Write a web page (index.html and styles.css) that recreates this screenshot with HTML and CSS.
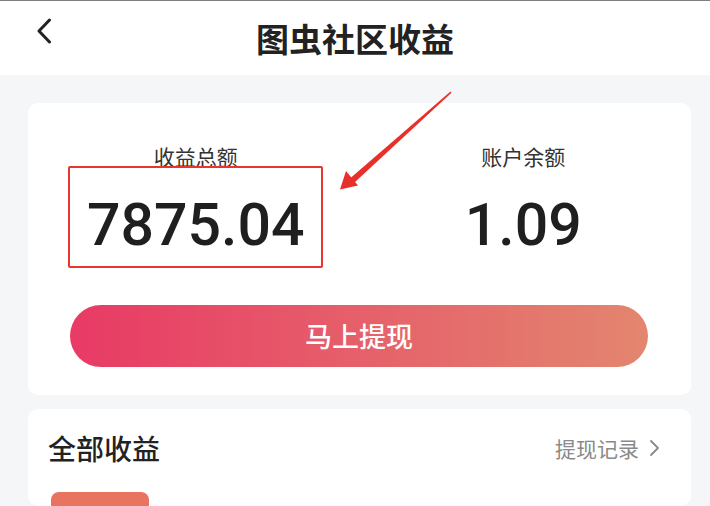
FILE: index.html
```html
<html>

	<head>
		<meta charset="utf-8">
		<title>图虫社区收益</title>
		<meta name="viewport" content="width=device-width,initial-scale=1,minimum-scale=1,maximum-scale=1,user-scalable=no" />

		<link rel="stylesheet" href="styles.css">
	</head>

	<body>
		<div class="header">
			<span class="back">
				<svg width="16" height="26" viewBox="0 0 16 26">
					<polyline points="13.5,2 3,13 13.5,24" fill="none" stroke="#222" stroke-width="3" stroke-linecap="round" stroke-linejoin="round" />
				</svg>
			</span>
			<h1 class="title">图虫社区收益</h1>
			<span></span>
		</div>

		<div class="main">
			<!-- 收益 -->
			<div class="card total">
				<div class="cols">
					<div class="col">
						<p class="label">收益总额</p>
						<p class="value marked">7875.04</p>
					</div>
					<div class="col">
						<p class="label">账户余额</p>
						<p class="value">1.09</p>
					</div>
				</div>
				<div class="btn">马上提现</div>
			</div>

			<!-- 全部收益 -->
			<div class="card list">
				<div class="list-head">
					<h2>全部收益</h2>
					<span class="more">提现记录
						<svg width="12" height="18" viewBox="0 0 12 18">
							<polyline points="3,2 10,9 3,16" fill="none" stroke="#8a8a8a" stroke-width="1.8" stroke-linecap="round" stroke-linejoin="round" />
						</svg>
					</span>
				</div>
				<div class="tag"></div>
			</div>
		</div>

		<!-- 标注箭头 -->
		<svg class="arrow" width="710" height="506" viewBox="0 0 710 506">
			<polygon points="450.5,91.5 451.5,92.8 354.5,182.5 350.5,178" fill="#e8302a" />
			<polygon points="340,189.5 346,171 358,185.5" fill="#e8302a" />
		</svg>
	</body>

</html>
```

FILE: styles.css
```css
*{
	margin: 0px;
	padding: 0px;
}
body{
	width: 710px;
	height: 506px;
	overflow: hidden;
	background: #f5f6f8;
	font-family: "Noto Sans CJK SC", sans-serif;
	color: #222;
}
.header{
	display: grid;
	grid-template-columns: 1fr auto 1fr;
	height: 74px;
	border-top: 1px solid #7f7f7f;
	background: #fff;
}
.back{
	padding: 17px 0 0 36px;
}
.title{
	font-size: 33px;
	font-weight: 700;
	line-height: 74px;
	color: #222;
}
.main{
	padding: 28px 19px 0 28px;
}
.card{
	background: #fff;
	border-radius: 10px;
}
.total{
	padding: 42px 0 28px;
}
.cols{
	display: grid;
	grid-template-columns: 1fr 1fr;
	padding: 0 4px;
}
.col{
	display: flex;
	flex-direction: column;
	align-items: center;
}
.label{
	font-size: 21px;
	line-height: 22px;
	color: #333;
}
.value{
	box-sizing: border-box;
	width: 255px;
	height: 102px;
	margin-top: -1px;
	padding-top: 27px;
	border: 2px solid transparent;
	border-radius: 2px;
	font-family: Roboto, "Liberation Sans", sans-serif;
	font-size: 59px;
	font-weight: 500;
	line-height: 60px;
	text-align: center;
	color: #1f1f1f;
}
.marked{
	border-color: #e8362e;
}
.btn{
	height: 62px;
	margin: 37px 43px 0 42px;
	border-radius: 31px;
	background: linear-gradient(90deg, #e83a65, #e3866f);
	font-size: 27px;
	font-weight: 500;
	line-height: 62px;
	text-align: center;
	color: #fff;
}
.list{
	margin-top: 14px;
	height: 78px;
	overflow: hidden;
	padding: 19px 31px 0 20px;
}
.list-head{
	display: flex;
	justify-content: space-between;
	align-items: center;
	height: 40px;
}
.list-head h2{
	font-size: 28px;
	font-weight: 500;
	color: #222;
}
.more{
	display: flex;
	align-items: center;
	gap: 9px;
	font-size: 21px;
	color: #8a8a8a;
}
.tag{
	width: 98px;
	height: 20px;
	margin: 24px 0 0 3px;
	border-radius: 8px 8px 0 0;
	background: #e8735f;
}
.arrow{
	position: absolute;
	left: 0;
	top: 0;
	pointer-events: none;
}
```
